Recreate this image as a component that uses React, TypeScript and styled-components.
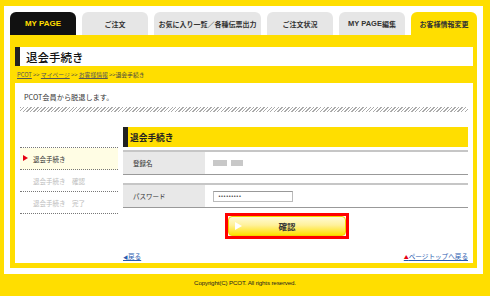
import React from 'react';
import styled, { createGlobalStyle } from 'styled-components';

const YELLOW = '#ffde00';
const JP = '"Noto Sans CJK JP", "Liberation Sans", sans-serif';

const GlobalStyle = createGlobalStyle`
  html, body {
    margin: 0;
    padding: 0;
    background: ${YELLOW};
    font-family: ${JP};
    color: #333;
  }
`;

const Page = styled.div`
  width: 490px;
  height: 296px;
  padding-top: 6px;
  box-sizing: border-box;
  overflow: hidden;
`;

const Frame = styled.div`
  margin: 0 7px 0 4px;
  padding: 6px;
  background: #fff;
`;

const Tabs = styled.div`
  display: flex;
  gap: 6px;
  height: 23px;
`;

const Tab = styled.div<{ $kind?: 'home' | 'active'; $wide?: boolean }>`
  flex: ${(p) => (p.$wide ? '1' : '0 0 66px')};
  display: flex;
  align-items: center;
  justify-content: center;
  border-radius: 6px 6px 0 0;
  font-size: 7px;
  font-weight: 700;
  white-space: nowrap;
  background: ${(p) => (p.$kind === 'home' ? '#111' : p.$kind === 'active' ? YELLOW : '#e6e6e6')};
  color: ${(p) => (p.$kind === 'home' ? YELLOW : '#333')};
`;

const Latin = styled.span<{ $size?: number }>`
  font-family: "Liberation Sans", sans-serif;
  font-size: ${(p) => p.$size ?? 8}px;
  font-weight: 700;
`;

const Panel = styled.div`
  background: ${YELLOW};
  padding: 12px 4px 5px 5px;
`;

const TitleBar = styled.h1`
  margin: 0;
  height: 19px;
  background: #fff;
  border-left: 5px solid #222;
  padding-left: 6px;
  display: flex;
  align-items: center;
  font-size: 11.5px;
  font-weight: 500;
  color: #111;
`;

const Crumbs = styled.div`
  padding: 5px 0 0 2px;
  height: 17px;
  line-height: 8px;
  font-size: 5.8px;
  color: #444;
  box-sizing: border-box;
  a {
    color: #555;
    text-decoration: underline;
  }
`;

const Box = styled.div`
  background: #fff;
  height: 180px;
  padding: 10px 5px 0 5px;
  box-sizing: border-box;
`;

const Intro = styled.p`
  margin: 0;
  padding-left: 4px;
  line-height: 9px;
  font-size: 7.2px;
  color: #333;
`;

const Hatch = styled.div`
  margin-top: 5px;
  height: 5px;
  background: repeating-linear-gradient(135deg, #aaa 0 1px, #fff 1px 2.5px);
`;

const Columns = styled.div`
  display: flex;
  gap: 5px;
  margin-top: 15px;
`;

const Nav = styled.ul`
  list-style: none;
  margin: 20px 0 0 0;
  padding: 0;
  width: 98px;
  border-top: 1px dotted #777;
`;

const NavItem = styled.li<{ $active?: boolean }>`
  height: 21px;
  border-bottom: 1px dotted #777;
  display: flex;
  align-items: center;
  padding-left: 13px;
  position: relative;
  font-size: 6.5px;
  background: ${(p) => (p.$active ? '#fffde4' : 'transparent')};
  color: ${(p) => (p.$active ? '#333' : '#bdbdbd')};
  &::before {
    content: '';
    display: ${(p) => (p.$active ? 'block' : 'none')};
    position: absolute;
    left: 3px;
    top: 7px;
    border-left: 5px solid #e60012;
    border-top: 3.5px solid transparent;
    border-bottom: 3.5px solid transparent;
  }
`;

const Main = styled.div`
  flex: 1;
`;

const SectionHead = styled.h2`
  margin: 0 0 3px;
  height: 20px;
  background: ${YELLOW};
  border-left: 5px solid #222;
  padding-left: 2px;
  display: flex;
  align-items: center;
  font-size: 8.7px;
  font-weight: 700;
  color: #222;
`;

const Row = styled.div`
  display: flex;
  height: 22px;
  border-top: 2px solid #c6c6c6;
  border-bottom: 1px solid #999;
  & + & {
    margin-top: 8px;
  }
`;

const Label = styled.div`
  width: 82px;
  background: #e8e8e8;
  padding-left: 10px;
  box-sizing: border-box;
  display: flex;
  align-items: center;
  font-size: 6.5px;
  color: #333;
`;

const Value = styled.div`
  flex: 1;
  display: flex;
  align-items: center;
  padding-left: 8px;
  gap: 4px;
`;

const Blur = styled.span<{ $w: number }>`
  display: inline-block;
  width: ${(p) => p.$w}px;
  height: 6px;
  background: #c8c8c8;
  filter: blur(0.7px);
`;

const Input = styled.div`
  width: 80px;
  height: 11px;
  border: 1px solid #bbb;
  border-top-color: #999;
  box-sizing: border-box;
  font-family: "DejaVu Sans", sans-serif;
  font-size: 5px;
  line-height: 9px;
  padding-left: 4px;
  letter-spacing: -0.4px;
  color: #222;
  background: #fff;
`;

const ButtonRow = styled.div`
  margin-top: 5px;
  padding-left: 102px;
`;

const Outline = styled.div`
  width: 124px;
  border: 3px solid #ff0000;
  box-sizing: border-box;
`;

const Button = styled.button`
  display: flex;
  align-items: center;
  justify-content: center;
  position: relative;
  width: 100%;
  height: 20px;
  padding: 0;
  border: 1px solid #f3d200;
  border-radius: 4px;
  background: linear-gradient(#fffbd6, #fff19a 45%, #ffe100);
  font-family: ${JP};
  font-size: 8.5px;
  font-weight: 700;
  color: #333;
  &::before {
    content: '';
    position: absolute;
    left: 6px;
    top: 5px;
    border-left: 7px solid #fff;
    border-top: 4px solid transparent;
    border-bottom: 4px solid transparent;
  }
`;

const Links = styled.div`
  margin-top: 13px;
  display: flex;
  justify-content: space-between;
  line-height: 9px;
  font-size: 6.6px;
`;

const Link = styled.a`
  color: #2a5cb0;
  text-decoration: underline;
`;

const Mark = styled.span<{ $color: string }>`
  color: ${(p) => p.$color};
  font-size: 5px;
`;

const Footer = styled.div`
  height: 17px;
  display: flex;
  align-items: center;
  justify-content: center;
  font-family: "Liberation Sans", sans-serif;
  font-size: 6.2px;
  letter-spacing: -0.15px;
  color: #222;
`;

export default function App() {
  return (
    <Page>
      <GlobalStyle />
      <Frame>
        <Tabs>
          <Tab $kind="home"><Latin>MY PAGE</Latin></Tab>
          <Tab>ご注文</Tab>
          <Tab $wide>お気に入り一覧／各種伝票出力</Tab>
          <Tab>ご注文状況</Tab>
          <Tab><Latin $size={7.5}>MY PAGE</Latin>編集</Tab>
          <Tab $kind="active">お客様情報変更</Tab>
        </Tabs>
        <Panel>
          <TitleBar>退会手続き</TitleBar>
          <Crumbs>
            <a href="#">PCOT</a> &gt;&gt; <a href="#">マイページ</a> &gt;&gt; <a href="#">お客様情報</a> &gt;&gt;退会手続き
          </Crumbs>
          <Box>
            <Intro>PCOT会員から脱退します。</Intro>
            <Hatch />
            <Columns>
              <Nav>
                <NavItem $active>退会手続き</NavItem>
                <NavItem>退会手続き　確認</NavItem>
                <NavItem>退会手続き　完了</NavItem>
              </Nav>
              <Main>
                <SectionHead>退会手続き</SectionHead>
                <Row>
                  <Label>登録名</Label>
                  <Value>
                    <Blur $w={14} />
                    <Blur $w={12} />
                  </Value>
                </Row>
                <Row>
                  <Label>パスワード</Label>
                  <Value>
                    <Input>•••••••••</Input>
                  </Value>
                </Row>
                <ButtonRow>
                  <Outline>
                    <Button type="button">確認</Button>
                  </Outline>
                </ButtonRow>
                <Links>
                  <Link href="#"><Mark $color="#2a5cb0">◀</Mark>戻る</Link>
                  <Link href="#"><Mark $color="#e60012">▲</Mark>ページトップへ戻る</Link>
                </Links>
              </Main>
            </Columns>
          </Box>
        </Panel>
      </Frame>
      <Footer>Copyright(C) PCOT. All rights reserved.</Footer>
    </Page>
  );
}
